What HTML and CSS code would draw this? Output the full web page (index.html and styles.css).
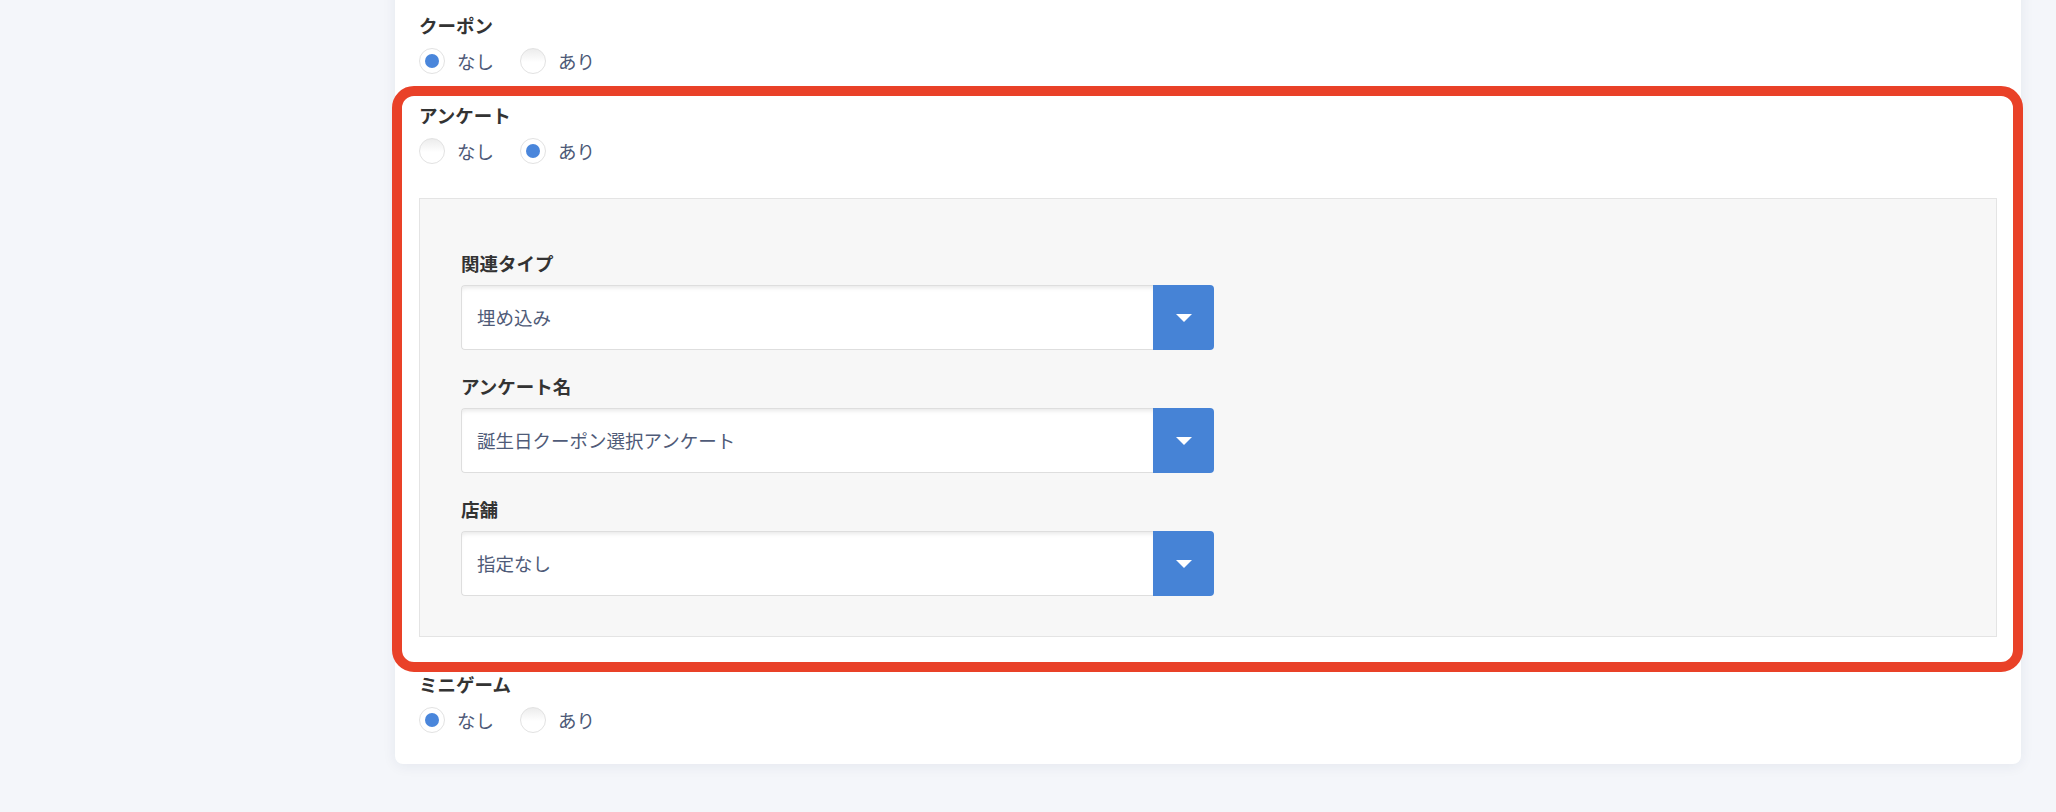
FILE: index.html
```html
<!DOCTYPE html>
<html lang="ja">
<head>
<meta charset="utf-8">
<title>フォーム</title>
<link rel="stylesheet" href="styles.css">
</head>
<body>
<div class="card">
  <div class="field">
    <div class="label">クーポン</div>
    <div class="radios">
      <span class="radio checked"></span><span class="rtext">なし</span>
      <span class="radio"></span><span class="rtext">あり</span>
    </div>
  </div>
  <div class="field field-survey">
    <div class="label">アンケート</div>
    <div class="radios">
      <span class="radio"></span><span class="rtext">なし</span>
      <span class="radio checked"></span><span class="rtext">あり</span>
    </div>
    <div class="panel">
      <div class="sub">
        <div class="label">関連タイプ</div>
        <div class="select"><div class="value">埋め込み</div><div class="btn"><span class="tri"></span></div></div>
      </div>
      <div class="sub">
        <div class="label">アンケート名</div>
        <div class="select"><div class="value">誕生日クーポン選択アンケート</div><div class="btn"><span class="tri"></span></div></div>
      </div>
      <div class="sub">
        <div class="label">店舗</div>
        <div class="select"><div class="value">指定なし</div><div class="btn"><span class="tri"></span></div></div>
      </div>
    </div>
  </div>
  <div class="field field-game">
    <div class="label">ミニゲーム</div>
    <div class="radios">
      <span class="radio checked"></span><span class="rtext">なし</span>
      <span class="radio"></span><span class="rtext">あり</span>
    </div>
  </div>
</div>
<div class="highlight"></div>
</body>
</html>
```
FILE: styles.css
```css
html, body {
  margin: 0;
  padding: 0;
}
body {
  background: #f4f6fa;
  font-family: "Noto Sans CJK JP", "Noto Sans", sans-serif;
  height: 812px;
  overflow: hidden;
  position: relative;
}
.card {
  margin: -20px 0 0 395px;
  width: 1626px;
  box-sizing: border-box;
  background: #fff;
  border-radius: 8px;
  box-shadow: 0 2px 14px rgba(30, 40, 80, 0.07);
  padding: 33px 24px 31px 24px;
}
.label {
  font-size: 18.5px;
  line-height: 24px;
  font-weight: 700;
  color: #333;
}
.radios {
  display: flex;
  align-items: center;
  height: 26px;
  margin-top: 11px;
}
.radio {
  width: 26px;
  height: 26px;
  box-sizing: border-box;
  border: 1px solid #e2e2e2;
  border-radius: 50%;
  background: linear-gradient(#ececec, #fff 55%);
  display: flex;
  align-items: center;
  justify-content: center;
  flex: none;
}
.radio.checked {
  background: #fff;
}
.radio.checked::after {
  content: "";
  width: 14px;
  height: 14px;
  border-radius: 50%;
  background: #4a86db;
}
.rtext {
  font-size: 18.5px;
  line-height: 26px;
  color: #4d5977;
  margin-left: 12px;
  margin-right: 26px;
}
.field-survey {
  margin-top: 29px;
}
.panel {
  margin-top: 34px;
  width: 1578px;
  box-sizing: border-box;
  background: #f7f7f7;
  border: 1px solid #e4e4e4;
  padding: 52px 41px 40px;
}
.sub + .sub {
  margin-top: 24px;
}
.select {
  margin-top: 10px;
  width: 753px;
  height: 65px;
  display: flex;
  border-radius: 4px;
  background: #fff;
}
.value {
  flex: 1;
  border: 1px solid #dedede;
  border-right: none;
  border-radius: 4px 0 0 4px;
  box-shadow: inset 0 4px 4px -2px rgba(0, 0, 0, 0.09);
  font-size: 18.5px;
  line-height: 63px;
  color: #4f5b78;
  padding-left: 15px;
}
.btn {
  width: 61px;
  background: #4683d6;
  border-radius: 0 4px 4px 0;
  display: flex;
  align-items: center;
  justify-content: center;
}
.tri {
  width: 0;
  height: 0;
  border-left: 8px solid transparent;
  border-right: 8px solid transparent;
  border-top: 8px solid #fff;
}
.field-game {
  margin-top: 35px;
}
.highlight {
  position: absolute;
  left: 392px;
  top: 86px;
  width: 1631px;
  height: 586px;
  box-sizing: border-box;
  border: 10px solid #e94128;
  border-radius: 22px;
  pointer-events: none;
}
```
